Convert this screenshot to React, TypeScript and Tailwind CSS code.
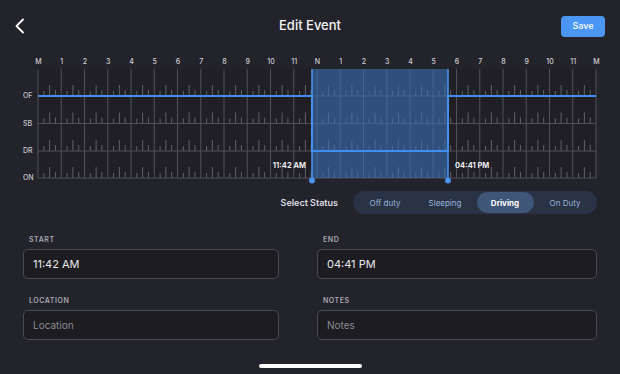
import React from "react";

const X0 = 38;
const X1 = 596;
const HOUR = (X1 - X0) / 24;
const TOP = 69;
const ROWS = [
  { label: "OF", y: 96 },
  { label: "SB", y: 123.5 },
  { label: "DR", y: 151 },
  { label: "ON", y: 178 },
];
const HOUR_LABELS = [
  "M", "1", "2", "3", "4", "5", "6", "7", "8", "9", "10", "11",
  "N", "1", "2", "3", "4", "5", "6", "7", "8", "9", "10", "11", "M",
];
const SEL_START = 312;
const SEL_END = 448;

const LogChart = () => {
  const ticks: React.ReactNode[] = [];
  ROWS.forEach((row) => {
    for (let h = 0; h < 24; h++) {
      const base = X0 + h * HOUR;
      [
        { f: 0.25, len: 5 },
        { f: 0.5, len: 11 },
        { f: 0.75, len: 6 },
      ].forEach((t) => {
        const x = base + t.f * HOUR;
        ticks.push(
          <line
            key={`${row.label}-${h}-${t.f}`}
            x1={x}
            x2={x}
            y1={row.y}
            y2={row.y - t.len}
            stroke="#606068"
            strokeWidth={1}
          />
        );
      });
    }
  });

  return (
    <svg
      width={620}
      height={136}
      viewBox="0 52 620 136"
      className="block"
      style={{ fontFamily: "Inter, 'Liberation Sans', sans-serif" }}
    >
      {/* hour labels */}
      {HOUR_LABELS.map((l, i) => (
        <text
          key={i}
          x={X0 + i * HOUR + 0.5}
          y={62}
          fontSize={7}
          fontWeight={500}
          fill="#cfcfd5"
          textAnchor="middle"
          dominantBaseline="middle"
        >
          {l}
        </text>
      ))}
      {/* row labels */}
      {ROWS.map((r) => (
        <text
          key={r.label}
          x={23}
          y={r.y + 0.5}
          fontSize={7}
          fontWeight={500}
          fill="#c6c6cc"
          dominantBaseline="middle"
        >
          {r.label}
        </text>
      ))}

      <rect x={X0} y={TOP} width={X1 - X0} height={178 - TOP} fill="#1f1f25" />

      {ticks}

      {/* grid */}
      {Array.from({ length: 25 }).map((_, i) => (
        <line
          key={i}
          x1={X0 + i * HOUR}
          x2={X0 + i * HOUR}
          y1={TOP}
          y2={178}
          stroke="#50505a"
          strokeWidth={1}
        />
      ))}
      {ROWS.map((r) => (
        <line
          key={r.label}
          x1={X0}
          x2={X1}
          y1={r.y}
          y2={r.y}
          stroke="#50505a"
          strokeWidth={1}
        />
      ))}

      {/* selected range */}
      <rect
        x={SEL_START}
        y={TOP}
        width={SEL_END - SEL_START}
        height={178 - TOP}
        fill="#3a6fb8"
        fillOpacity={0.6}
      />

      {/* duty status line */}
      <path
        d={`M${X0} 96 H${SEL_START} V151 H${SEL_END} V96 H${X1}`}
        fill="none"
        stroke="#3f8fef"
        strokeWidth={2}
      />

      {/* selection edges */}
      {[SEL_START, SEL_END].map((x) => (
        <g key={x}>
          <line x1={x} x2={x} y1={TOP} y2={180} stroke="#4a92ea" strokeWidth={1.6} />
          <circle cx={x} cy={180.5} r={3} fill="#4a92ea" />
        </g>
      ))}

      <text
        x={306}
        y={166}
        fontSize={7.5}
        fontWeight={700}
        fill="#ececf0"
        textAnchor="end"
        dominantBaseline="middle"
      >
        11:42 AM
      </text>
      <text
        x={455}
        y={166}
        fontSize={7.5}
        fontWeight={700}
        fill="#ececf0"
        dominantBaseline="middle"
      >
        04:41 PM
      </text>
    </svg>
  );
};

const STATUSES = ["Off duty", "Sleeping", "Driving", "On Duty"];

const Field = ({
  label,
  value,
  placeholder,
}: {
  label: string;
  value?: string;
  placeholder?: string;
}) => (
  <div>
    <div className="h-[9px] pl-[6px] text-[7px] leading-[9px] font-semibold tracking-[0.08em] text-[#a7a7b1]">
      {label}
    </div>
    <div className="mt-[5px] flex h-[30px] items-center rounded-[5px] border border-[#4a4a52] bg-[#1c1c21] px-[9px]">
      {value ? (
        <span className="text-[11px] text-[#e8e8ec]">{value}</span>
      ) : (
        <span className="text-[10px] text-[#8b8b93]">{placeholder}</span>
      )}
    </div>
  </div>
);

export default function App() {
  const selected = "Driving";

  return (
    <div
      className="h-[374px] w-[620px] overflow-hidden bg-[#23232b] text-white"
      style={{ fontFamily: "Inter, 'Liberation Sans', sans-serif" }}
    >
      {/* Header */}
      <div className="grid h-[52px] grid-cols-[1fr_auto_1fr] items-center">
        <div className="pl-[14px]">
          <svg width={12} height={16} viewBox="0 0 12 16" className="block">
            <path
              d="M9 1.5 L2.5 8 L9 14.5"
              fill="none"
              stroke="#ffffff"
              strokeWidth={1.8}
              strokeLinecap="round"
              strokeLinejoin="round"
            />
          </svg>
        </div>
        <h1 className="text-[13px] font-medium text-[#f2f2f4]">Edit Event</h1>
        <div className="flex justify-end pr-[15px]">
          <button className="h-[21px] w-[44px] rounded-[4px] bg-[#4b96f3] text-[9px] font-medium text-white">
            Save
          </button>
        </div>
      </div>

      {/* Chart */}
      <LogChart />

      {/* Status selector */}
      <div className="mt-[3px] flex items-center justify-end pr-[23px]">
        <span className="mr-[15px] text-[9px] font-semibold text-[#dcdce0]">
          Select Status
        </span>
        <div className="flex h-[23px] items-center gap-[3px] rounded-full bg-[#2a3346] px-[3.5px]">
          {STATUSES.map((s) => (
            <div
              key={s}
              className={`flex h-[21px] w-[57px] items-center justify-center rounded-full text-[8px] ${
                s === selected
                  ? "bg-[#3f5679] font-bold text-white"
                  : "text-[#98b3dc]"
              }`}
            >
              {s}
            </div>
          ))}
        </div>
      </div>

      {/* Form */}
      <div className="grid grid-cols-[256px_280px] gap-x-[38px] gap-y-[17px] px-[23px] pt-[21px]">
        <Field label="START" value="11:42 AM" />
        <Field label="END" value="04:41 PM" />
        <Field label="LOCATION" placeholder="Location" />
        <Field label="NOTES" placeholder="Notes" />
      </div>

      {/* Home indicator */}
      <div className="mx-auto mt-[24px] h-[4px] w-[103px] rounded-full bg-white" />
    </div>
  );
}
